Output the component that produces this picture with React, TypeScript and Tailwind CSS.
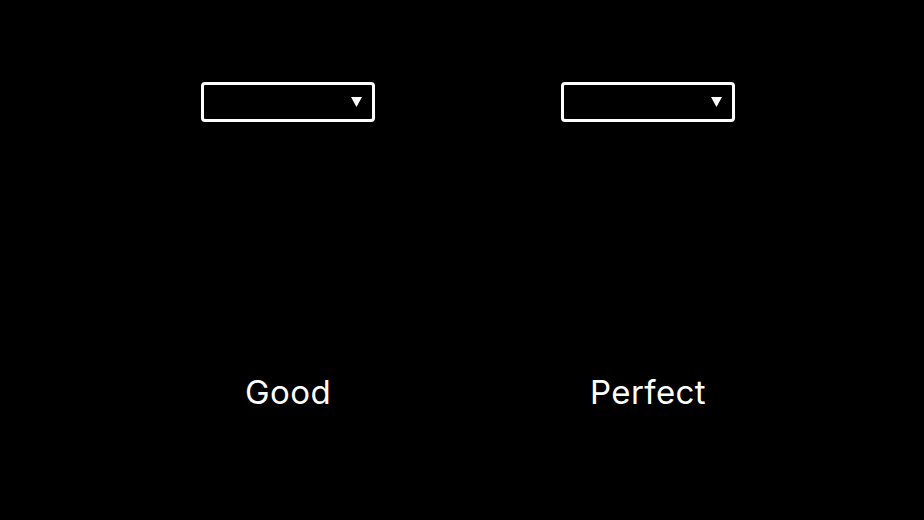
export default function App() {
  const items = ["Good", "Perfect"];

  return (
    <div
      className="w-[924px] h-[520px] bg-black text-white flex pl-[108px]"
      style={{ fontFamily: "Inter, 'Noto Sans', sans-serif" }}
    >
      {items.map((label) => (
        <div key={label} className="w-[360px] flex flex-col items-center pt-[82px]">
          {/* Select box */}
          <div className="w-[174px] h-[40px] border-[3px] border-white rounded-[4px] flex items-center justify-end pr-[10px]">
            <svg width="11" height="10" viewBox="0 0 11 10">
              <polygon points="0,0 11,0 5.5,10" fill="white" />
            </svg>
          </div>
          <div className="mt-[246px] text-[33px] leading-[48px] font-normal tracking-[0.4px]">{label}</div>
        </div>
      ))}
    </div>
  );
}
